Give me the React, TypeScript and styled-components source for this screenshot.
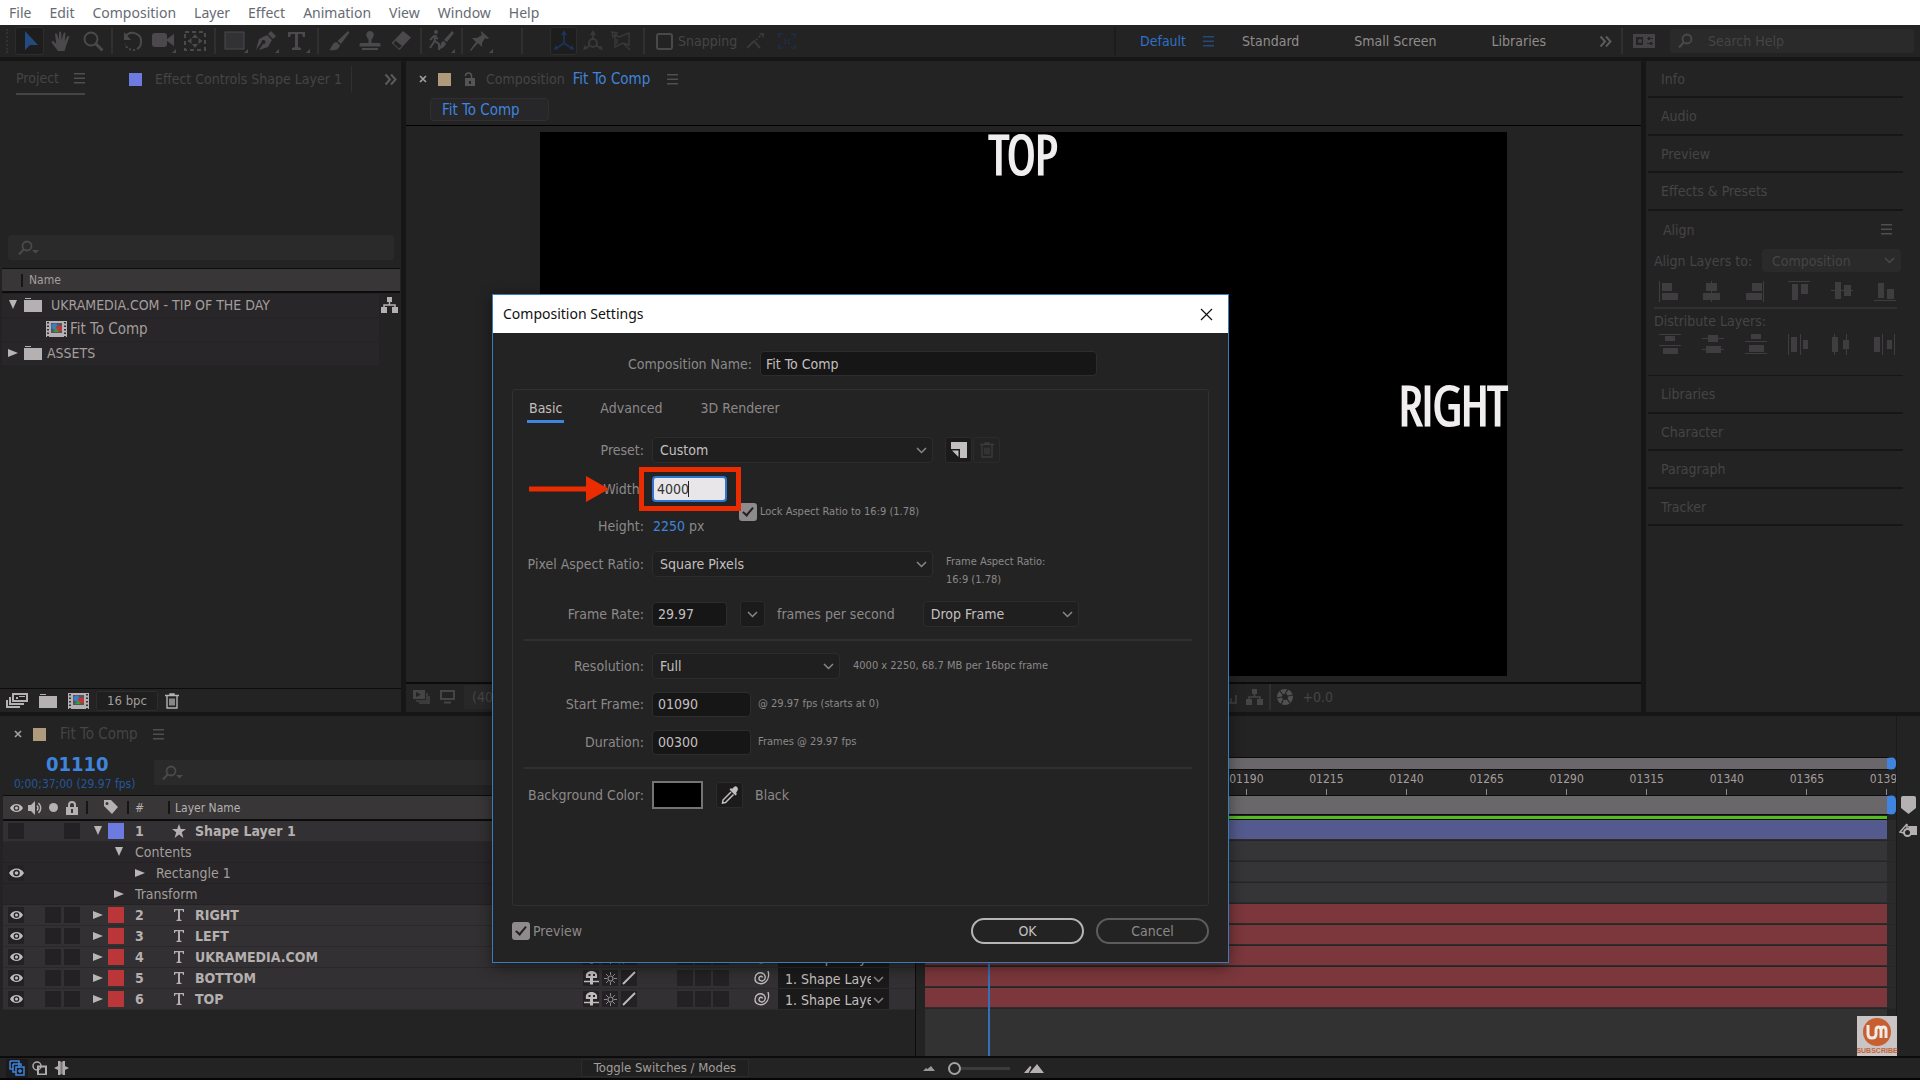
import React from "react";
import styled, { createGlobalStyle, css } from "styled-components";

const ui = `"DejaVu Sans Condensed", "Noto Sans", sans-serif`;
const system = `"Noto Sans", "Open Sans", sans-serif`;
const c = {
  panel: "#232323",
  gap: "#161616",
  line: "#0c0c0c",
  field: "#2a2a2a",
  dim: "#464446",
  dimIcon: "#4b494c",
  text: "#a39e9d",
  bright: "#c3bfbf",
  label: "#8c8889",
  blue: "#2f70c8",
  blueBright: "#3f84de",
  row: "#323032",
  subRow: "#282628",
  head: "#383637",
  tan: "#b09a7c",
  violet: "#6d7ae0",
  red: "#ba3638",
};

const Global = createGlobalStyle`
  *, *::before, *::after { box-sizing: border-box; }
  html, body { margin: 0; background: ${c.panel}; }
  body { font: 14px/20px ${ui}; color: ${c.text}; }
  button, input, select { font: inherit; color: inherit; margin: 0; padding: 0; border: 0; background: none; }
  svg { display: block; flex: none; }
`;

/* ---------- page frame ---------- */
const Page = styled.div`
  height: 100vh;
  min-height: 900px;
  display: flex;
  flex-direction: column;
  background: ${c.gap};
  overflow: hidden;
  position: relative;
`;
const MenuBar = styled.nav`
  flex: none;
  height: 25px;
  display: flex;
  align-items: center;
  gap: 18px;
  padding: 0 9px;
  background: #fff;
  font: 14px/20px ${system};
`;
const MenuLink = styled.a`
  color: #666b73;
  text-decoration: none;
`;
const Toolbar = styled.div`
  flex: none;
  height: 32px;
  display: flex;
  align-items: center;
  background: ${c.panel};
  margin-bottom: 4px;
  padding-right: 6px;
`;
const Tool = styled.button<{ $on?: boolean; $w?: number; $faint?: boolean }>`
  width: ${(p) => p.$w ?? 31}px;
  height: 28px;
  display: flex;
  align-items: center;
  justify-content: center;
  color: ${(p) => (p.$faint ? "#3a383a" : c.dimIcon)};
  border-radius: 3px;
  ${(p) => p.$on && css`background: #1d1d1e; border: 1px solid #2d2d2e; color: ${p.$faint ? "#1b3458" : "#234b80"};`}
`;
const ToolSep = styled.span<{ $m?: number }>`
  width: 2px;
  height: 26px;
  margin: 0 ${(p) => p.$m ?? 4}px;
  background: #303030;
`;
const Grip = styled.span`
  width: 4px;
  height: 24px;
  margin: 0 5px 0 6px;
  border-left: 2px dotted #323232;
`;
const Spacer = styled.span`
  flex: 1;
`;
const SnapLabel = styled.label`
  display: flex;
  align-items: center;
  gap: 5px;
  margin-left: 3px;
  color: ${c.dim};
`;
const SnapBox = styled.input`
  appearance: none;
  width: 17px;
  height: 17px;
  border: 2px solid #4a484a;
  border-radius: 3px;
`;
const Workspaces = styled.div`
  display: flex;
  align-items: center;
  padding-left: 24px;
  border-left: 2px solid #1c1c1c;
  height: 28px;
`;
const Workspace = styled.button<{ $on?: boolean; $end: number }>`
  color: ${(p) => (p.$on ? c.blue : "#918c8c")};
  margin-right: ${(p) => p.$end}px;
`;
const HelpSearch = styled.label`
  width: 244px;
  height: 24px;
  display: flex;
  align-items: center;
  gap: 8px;
  padding-left: 8px;
  margin-left: 14px;
  border-radius: 3px;
  background: ${c.field};
  color: ${c.dimIcon};
`;
const PlainInput = styled.input`
  flex: 1;
  min-width: 0;
  outline: 0;
  &::placeholder { color: ${c.dim}; opacity: 1; }
`;

/* ---------- panels ---------- */
const Upper = styled.div`
  flex: 1;
  min-height: 0;
  display: flex;
  gap: 5px;
  margin-bottom: 4px;
`;
const Panel = styled.section<{ $w?: number }>`
  ${(p) => (p.$w ? `flex: 0 0 ${p.$w}px;` : "flex: 1; min-width: 0;")}
  display: flex;
  flex-direction: column;
  background: ${c.panel};
`;
const TabRow = styled.div`
  flex: none;
  height: 36px;
  display: flex;
  align-items: center;
  color: ${c.dim};
`;
const ActiveTab = styled.div`
  display: flex;
  align-items: center;
  gap: 15px;
  height: 32px;
  margin: 0 44px 0 16px;
  border-bottom: 2px solid #464446;
`;
const Swatch = styled.span<{ $c: string; $s?: number }>`
  flex: none;
  width: ${(p) => p.$s ?? 13}px;
  height: ${(p) => p.$s ?? 13}px;
  background: ${(p) => p.$c};
`;
const TabText = styled.span<{ $on?: boolean; $name?: boolean }>`
  color: ${(p) => (p.$on ? c.blueBright : c.dim)};
  font-size: ${(p) => (p.$name ? 15 : 14)}px;
`;
const TabEdge = styled.span`
  width: 1px;
  height: 26px;
  margin: 0 32px 0 9px;
  background: #303030;
`;
const ProjectSearch = styled.label`
  display: flex;
  align-items: center;
  height: 25px;
  margin: 138px 7px 8px 8px;
  padding-left: 10px;
  border-radius: 3px;
  background: ${c.field};
  color: ${c.dimIcon};
`;
const ListHead = styled.div`
  height: 25px;
  margin: 0 1px 0 2px;
  display: flex;
  align-items: center;
  background: ${c.head};
  border-top: 1px solid ${c.line};
  border-bottom: 2px solid ${c.line};
  font-size: 12px;
`;
const HeadSep = styled.span<{ $l: number; $r: number }>`
  width: 2px;
  height: 13px;
  margin: 0 ${(p) => p.$r}px 0 ${(p) => p.$l}px;
  background: #161616;
`;
const FileRow = styled.div`
  display: flex;
  align-items: center;
  margin-left: 2px;
  height: 24px;
`;
const FileCell = styled.div<{ $pad: number; $gap: number; $name?: boolean }>`
  flex: 1;
  height: 23px;
  display: flex;
  align-items: center;
  gap: 6px;
  padding-left: ${(p) => p.$pad}px;
  background: ${c.subRow};
  color: ${c.text};
  font-size: ${(p) => (p.$name ? 15 : 14)}px;
  span { margin-left: ${(p) => p.$gap}px; }
`;
const FileSide = styled.div`
  width: 22px;
  padding-left: 2px;
`;
const ProjectFoot = styled.div`
  flex: none;
  margin-top: auto;
  height: 24px;
  display: flex;
  align-items: center;
  gap: 11px;
  padding-left: 6px;
  border-top: 1px solid ${c.line};
  color: #b6b2b2;
`;
const IconButton = styled.button`
  display: flex;
  color: inherit;
`;
const DepthButton = styled.button`
  width: 62px;
  height: 20px;
  border: 1px solid #2d2d2d;
  border-radius: 3px;
  background: #1f1f1f;
  color: ${c.text};
  font-size: 13px;
  line-height: 18px;
  margin: 0 -4px;
`;

/* ---------- viewer ---------- */
const CrumbRow = styled.div`
  flex: none;
  height: 29px;
  padding: 1px 0 0 24px;
  border-bottom: 1px solid #000;
`;
const Crumb = styled.button`
  width: 119px;
  height: 23px;
  padding-left: 11px;
  text-align: left;
  font-size: 15px;
  color: ${c.blueBright};
  background: #272729;
  border: 1px solid #2f2f31;
  border-radius: 4px;
`;
const Viewer = styled.div`
  flex: 1;
  min-height: 0;
  display: flex;
  justify-content: center;
  padding: 6px 0;
`;
const Canvas = styled.div`
  height: 100%;
  aspect-ratio: 16 / 9;
  background: #000;
  position: relative;
`;
const Title = styled.span<{ $at: "top" | "right" }>`
  position: absolute;
  font: 300 54px/42px "Open Sans Condensed Light", "Open Sans Condensed", "Liberation Sans Narrow", sans-serif;
  color: #f0eeee;
  -webkit-text-stroke: 3px #f0eeee;
  ${(p) =>
    p.$at === "top"
      ? css`top: 0; left: 0; right: 0; text-align: center;`
      : css`top: 0; bottom: 0; right: 0; height: 42px; margin: auto 0;`}
`;
const ViewerFoot = styled.div`
  flex: none;
  height: 30px;
  display: flex;
  align-items: center;
  padding: 0 308px 2px 7px;
  gap: 9px;
  border-top: 2px solid ${c.line};
  color: ${c.dim};
`;

/* ---------- side stack ---------- */
const SideHead = styled.button<{ $line?: boolean }>`
  display: flex;
  justify-content: space-between;
  align-items: center;
  width: 255px;
  height: 37px;
  margin-left: 2px;
  padding: 0 13px;
  color: ${c.dim};
  text-align: left;
  ${(p) => p.$line && `border-bottom: 2px solid ${c.gap};`}
  &:nth-child(even) { height: 38px; }
`;
const AlignBox = styled.div`
  width: 255px;
  height: 165px;
  margin-left: 2px;
  border-bottom: 1px solid ${c.gap};
  color: ${c.dim};
`;
const AlignRow = styled.div`
  display: flex;
  align-items: center;
  justify-content: space-between;
  margin: 1px 2px 9px 6px;
`;
const IconGrid = styled.div`
  display: grid;
  grid-template-columns: repeat(6, 43px);
  justify-items: center;
`;
const AlignTitle = styled.div`
  margin: 5px 6px 3px;
  padding-top: 2px;
  border-top: 2px solid #303030;
`;

/* ---------- select ---------- */
const SelectWrap = styled.span<{ $w: number; $h?: number; $kind?: "flat" | "parent" }>`
  display: inline-grid;
  align-items: center;
  width: ${(p) => p.$w}px;
  height: ${(p) => p.$h ?? 26}px;
  background: ${(p) => (p.$kind === "flat" ? c.field : p.$kind === "parent" ? "#1b1a1b" : "#1f1f1f")};
  border: 1px solid ${(p) => (p.$kind ? "transparent" : "#2c2c2c")};
  border-radius: ${(p) => (p.$kind === "parent" ? 0 : 4)}px;
  svg { grid-area: 1 / 1; justify-self: end; margin-right: ${(p) => (p.$kind === "parent" ? 4 : 5)}px; pointer-events: none; }
`;
const SelectBox = styled.select<{ $c: string; $pad?: number; $end?: number }>`
  grid-area: 1 / 1;
  appearance: none;
  width: 100%;
  height: 100%;
  padding: 0 ${(p) => p.$end ?? 22}px 0 ${(p) => p.$pad ?? 7}px;
  color: ${(p) => p.$c};
  outline: 0;
`;

function Chevron({ color = "#8a8687" }: { color?: string }) {
  return (
    <svg width="11" height="7" viewBox="0 0 11 7" fill="none" stroke={color} strokeWidth="1.5">
      <path d="M1 1l4.500 4.500L10 1" />
    </svg>
  );
}
function Select(p: { id?: string; label?: string; w: number; h?: number; kind?: "flat" | "parent"; color?: string; value: string; pad?: number; end?: number }) {
  return (
    <SelectWrap $w={p.w} $h={p.h} $kind={p.kind}>
      <SelectBox id={p.id} aria-label={p.label} $c={p.color ?? c.bright} $pad={p.pad} $end={p.end} defaultValue={p.value}>
        <option>{p.value}</option>
      </SelectBox>
      <Chevron color={p.kind === "flat" ? "#4a484a" : undefined} />
    </SelectWrap>
  );
}

/* ---------- icons ---------- */
type IcoProps = { w?: number; h?: number; children: React.ReactNode; color?: string; box?: string };
const Ico = ({ w = 22, h = 22, color = "inherit", box, children }: IcoProps) => (
  <svg width={w} height={h} viewBox={box ?? `0 0 ${w} ${h}`} fill="currentColor" color={color} aria-hidden="true">
    {children}
  </svg>
);
const stroke = { fill: "none", stroke: "currentColor", strokeWidth: 2 } as const;
const Corner = () => <path d="M26 25v-4l-4 4z" />;

const Arrow = () => <Ico><path d="M6 1v19l5-5h8z" /></Ico>;
const Hand = () => (
  <Ico>
    <path d="M8 21c-2-3-5-6-6.500-9 .5-1.500 2-1.200 3 .2l1.800 1.800L5 4.500C5 3 6.800 2.800 7.200 4.200L8.800 10 9 2.500C9.200 1 11 1 11.200 2.500l.4 7.500L13.500 3.200c.4-1.300 2.100-1 2 .5L14.700 11l2.600-4.500c.8-1 2.200-.3 1.800 1L16 16c-.5 2-1 3.500-1.500 5z" />
  </Ico>
);
const Zoom = ({ s = 22 }: { s?: number }) => (
  <Ico w={s} h={s} box="0 0 22 22"><circle cx="9" cy="9" r="6.500" {...stroke} /><path d="M13.500 13.500l7 7" {...stroke} strokeWidth={3} /></Ico>
);
const SearchFlip = ({ menu }: { menu?: boolean }) => (
  <Ico w={22} h={16}>
    <circle cx="9" cy="6" r="4.500" {...stroke} strokeWidth={1.8} />
    <path d="M6 9l-5 5.500" {...stroke} />
    {menu && <path d="M14 10h7l-3.500 3.500z" />}
  </Ico>
);
const Rotate = () => <Ico><path d="M4 6C8 0 20 3 19 12c0 4-2 6-4 7" {...stroke} /><path d="M2 2v8h7z" /><path d="M13 20a9 9 0 0 1-10-6" {...stroke} strokeDasharray="2 2" /></Ico>;
const Camera = () => <Ico w={28} h={26}><rect x="2" y="5" width="15" height="14" rx="3" /><path d="M17 11l7-5v12l-7-5z" /><Corner /></Ico>;
const PanBehind = () => (
  <Ico>
    <rect x="1" y="2" width="20" height="18" {...stroke} strokeDasharray="4 3" />
    <path d="M11 4l3 4H8zM11 18l3-4H8zM3.500 11l4-3v6zM18.500 11l-4-3v6z" />
  </Ico>
);
const RectTool = () => <Ico w={28} h={26}><rect x="3" y="4" width="19" height="17" fill="#323134" stroke="currentColor" /><Corner /></Ico>;
const Pen = () => <Ico w={28} h={26}><path d="M3 22l3-11 8-4 5 5-4 7-9 3 4-6a2 2 0 1 0-1.500-1.500zM15 6l3-3 5 5-3 3z" /><Corner /></Ico>;
const TypeTool = () => <Ico w={28} h={26}><path d="M4 4h17v5h-2l-1-3h-4v13l3 1v2H8v-2l3-1V6H7L6 9H4z" /><Corner /></Ico>;
const Brush = () => <Ico><path d="M20 1l1.500 1.500L13 14l-3.500-3zM8.500 12l3.500 3c-1 5-6 6-11 5 3-1 2-7 7.500-8z" /></Ico>;
const Stamp = () => <Ico><path d="M11 1a4 4 0 0 1 3 6.500l-1.500 2V13H20c1 0 1.500 1 1.500 2v1.500h-21V15c0-1 .5-2 1.500-2h7.500V9.500L8 7.500A4 4 0 0 1 11 1zM3 18h16v2H3z" /></Ico>;
const Eraser = () => <Ico><path d="M13 1l8 6.500L9.500 20 1.500 13z" /><path d="M5.500 10.500l6.500 5.500-3 2.500-5.500-5z" fill={c.panel} /></Ico>;
const Roto = () => <Ico w={30} h={26}><circle cx="9" cy="4" r="2" /><path d="M9 7l-2 7-4 6M8 13l4 3v6M3 12l4-4 4 3" {...stroke} /><path d="M25 3l2 2-7 9-3-2zM16 13l3 2c-1 4-4 6-8 6 3-2 2-6 5-8z" /><path d="M28 25v-4l-4 4z" /></Ico>;
const Pin = () => <Ico w={28} h={26}><path d="M14 3l8 7-2 1-2-1-3 5v4l-4-4-7 8-1-1 6-8-4-4h5l5-3-1-2z" /><Corner /></Ico>;
const Axis = ({ sphere }: { sphere?: boolean }) => (
  <Ico><path d="M11 13V4M11 13l-7 5M11 13l7 5" {...stroke} strokeWidth={1.800} /><path d="M11 0l3 5H8zM1 20l1.500-5 3 4zM21 20l-1.500-5-3 4z" />{sphere && <circle cx="11" cy="13" r="4" fill={c.panel} stroke="currentColor" strokeWidth="2" />}</Ico>
);
const AxisView = () => <Ico><path d="M4 5l4 2 10-4v12l-6-2-8 4z" {...stroke} strokeWidth={1.500} /><path d="M1 2l5 1-4 4zM13 14l6 6M6 9v5" {...stroke} strokeWidth={1.500} /></Ico>;
const SnapLine = () => <Ico w={20} h={18}><path d="M1 16l7-7 6 7" {...stroke} /><path d="M10 8l5-5" {...stroke} strokeDasharray="2 2" /><path d="M13 1h5v5z" /></Ico>;
const SnapGrid = () => <Ico w={18} h={16} color="#1d2f4a"><path d="M1 5V1h4M13 1h4v4M17 11v4h-4M5 15H1v-4M6 6l2 2M12 6l-2 2M6 11l2-2M12 11l-2-2" {...stroke} strokeWidth={1.500} /></Ico>;
const Burger = ({ color = "#504e50" }: { color?: string }) => <Ico w={11} h={11} color={color}><path d="M0 0h11v1.500H0zM0 4.500h11V6H0zM0 9h11v1.500H0z" /></Ico>;
const More = ({ color = "#5c5a5c" }: { color?: string }) => <Ico w={13} h={13} color={color}><path d="M1.500 1.500l4.500 5-4.500 5M7 1.500l4.500 5-4.500 5" {...stroke} /></Ico>;
const Monitor2 = () => <Ico w={24} h={14} color="#444244"><path fillRule="evenodd" d="M1 0h22v14H1zM4 3v8h7V3zM15 5h6V4h-6zM15 10h6V9h-6z" /><circle cx="8" cy="7" r="2" /><path d="M17 3v3M19 8v3" {...stroke} stroke={c.panel} /></Ico>;
const CloseX = () => <Ico w={8} h={8} color="#a5a1a1"><path d="M1 1l6 6M7 1L1 7" {...stroke} strokeWidth={1.600} /></Ico>;
const OpenLock = () => <Ico w={11} h={14} color="#565456"><path fillRule="evenodd" d="M1 6h10v8H1zM5 9v3h2V9z" /><path d="M1.500 4c0-4 6-4 6 0v3" {...stroke} strokeWidth={1.600} /></Ico>;
const Folder = () => <Ico w={18} h={14} color="#b5b1b2"><path d="M1 0h6v1H1zM0 2h18v12H0z" /></Ico>;
const CompIcon = () => (
  <Ico w={21} h={16}>
    <path d="M0 0h21v16H0z" fill="#b5b1b2" />
    <path d="M2 1v15M19 1v15" stroke="#333" strokeWidth="2" strokeDasharray="1.500 2" />
    <path d="M5 2h11v10H5z" fill="#55555a" />
    <circle cx="8.500" cy="5.500" r="3" fill="#3a7ec8" /><path d="M10 5h6v5h-6z" fill="#c23636" /><path d="M7 11l3-4 3 4z" fill="#39993c" />
  </Ico>
);
const Flow = ({ color = "#b5b1b2" }: { color?: string }) => <Ico w={17} h={16} color={color}><path d="M6 0h5v5H6zM0 10h6v6H0zM11 10h6v6h-6z" /><path d="M8.500 5v3M3 11V8h11v3" {...stroke} strokeWidth={1.500} /></Ico>;
const Interpret = () => <Ico w={22} h={15}><path fillRule="evenodd" d="M6 0h16v9H6zM8 2v5h12V2zM10 4h2v2h-2zM13 3h6v1h-6z" /><path d="M4 4v7h14M1 7v7h13" {...stroke} strokeWidth={2} /></Ico>;
const Trash = ({ color }: { color?: string }) => <Ico w={14} h={16} color={color}><path d="M0 2.500h14M5 2V1h4v1M2 3v12h10V3M5 5.500v7M7 5.500v7M9 5.500v7" {...stroke} strokeWidth={1.400} /></Ico>;
const Eye = ({ w = 15 }: { w?: number }) => <Ico w={w} h={10} box="0 0 15 10" color="#c0bcbc"><path fillRule="evenodd" d="M0 5C3-1 12-1 15 5c-3 6-12 6-15 0zm7.500-3.300a3.300 3.300 0 1 0 0 6.600 3.300 3.300 0 0 0 0-6.600z" /><circle cx="7.500" cy="5" r="1.800" /></Ico>;
const Tri = ({ down }: { down?: boolean }) => <Ico w={10} h={10} color="#b9b5b5"><path d={down ? "M1 0h8L5 9z" : "M0 1l10 4-10 4z"} /></Ico>;
const Speaker = () => <Ico w={16} h={14}><path d="M0 4h3l4-4v14L3 10H0z" /><path d="M9 4.500q2 2.500 0 5M10.500 2q4.500 5 0 10" {...stroke} strokeWidth={1.500} /></Ico>;
const Lock = () => <Ico w={12} h={14}><path fillRule="evenodd" d="M0 6h12v8H0zM5 8v4h2V8z" /><path d="M3 6V4a3 3 0 0 1 6 0v2" {...stroke} /></Ico>;
const Tag = () => <Ico w={16} h={15}><path fillRule="evenodd" d="M1 0h7l7 7-6 7-8-8zM4 2a1.500 1.500 0 1 0 0 3 1.500 1.500 0 0 0 0-3z" /></Ico>;
const Star = () => <Ico w={14} h={14}><path d="M7 0l1.800 5H14l-4.200 3.200L11.400 14 7 10.500 2.600 14l1.600-5.800L0 5h5.200z" /></Ico>;
const LayerT = () => <Ico w={10} h={12}><path d="M0 0h10v3H9L8.500 1.200H6V10.500l1.500.5v1h-5v-1L4 10.500V1.200H1.500L1 3H0z" /></Ico>;
const Shy = () => <Ico w={15} h={14}><path fillRule="evenodd" d="M2 7C1 2 4 0 7.500 0S14 2 13 7zM4.500 3v2h2V3zM9 3v2h2V3z" /><path d="M0 10.500h15" {...stroke} strokeWidth={1.500} /><path d="M7.500 6v7.500" {...stroke} strokeWidth={3} /></Ico>;
const Sun = () => <Ico w={13} h={13} color="#8d8989"><circle cx="6.500" cy="6.500" r="2.500" {...stroke} strokeWidth={1.200} /><path d="M6.500 0v3M6.500 10v3M0 6.500h3M10 6.500h3M2 2l2 2M9 9l2 2M11 2L9 4M4 9l-2 2" {...stroke} strokeWidth={1} /></Ico>;
const Slash = () => <Ico w={14} h={14}><path d="M1 13L13 1" {...stroke} /></Ico>;
const Spiral = () => <Ico w={16} h={14}><path d="M14 0c1 3 1 8-2.500 11C8 14 1 13 1 7.500 1 3 5 1 8 2s4 4 2.500 6.500C9 11 4.500 10 5 7c.5-2 3-2.500 3.500-.5" {...stroke} strokeWidth={1.400} /></Ico>;
const Aperture = () => <Ico w={16} h={16} color="#525052"><path fillRule="evenodd" d="M8 0a8 8 0 1 0 0 16A8 8 0 0 0 8 0zm0 5a3 3 0 1 1 0 6 3 3 0 0 1 0-6z" /><path d="M8 5L11 0M11 7l5-1M10 10l3 4M6 11l-2 5M5 8l-5 1M6 6L3 2" stroke={c.panel} strokeWidth="1.200" /></Ico>;
const Mountains = ({ big }: { big?: boolean }) => big
  ? <Ico w={20} h={9} color="#b5b1b2"><path d="M0 9l6-7 1.500 1L4.500 9zM5.500 9L13 0l7 9z" /></Ico>
  : <Ico w={12} h={5} color="#9a9697"><path d="M0 5l3-3 1.500 1L8 0l4 5z" /></Ico>;

type Bar = [number, number, number, number];
const alignIcons: Bar[][] = [
  [[0, 0, 1, 21], [3, 2, 10, 8], [3, 12, 16, 7]],
  [[9, 0, 1, 21], [4, 2, 11, 8], [1, 12, 17, 7]],
  [[18, 0, 1, 21], [7, 2, 10, 8], [1, 12, 16, 7]],
  [[0, 0, 22, 1], [4, 3, 6, 16], [13, 3, 7, 10]],
  [[0, 9, 22, 1], [4, 1, 6, 17], [13, 4, 7, 11]],
  [[0, 19, 22, 1], [4, 2, 6, 15], [13, 8, 7, 10]],
];
const distributeIcons: Bar[][] = [
  [[0, 0, 22, 1], [6, 2, 10, 5], [0, 11, 22, 1], [4, 14, 15, 6]],
  [[0, 4, 22, 1], [6, 1, 10, 7], [0, 15, 22, 1], [4, 12, 15, 7]],
  [[6, 0, 10, 5], [0, 7, 22, 1], [4, 11, 15, 7], [0, 19, 22, 1]],
  [[0, 0, 1, 21], [3, 3, 6, 15], [12, 0, 1, 21], [15, 6, 5, 9]],
  [[3, 0, 1, 21], [1, 3, 6, 15], [15, 0, 1, 21], [12, 6, 6, 9]],
  [[0, 3, 6, 15], [8, 0, 1, 21], [13, 6, 5, 9], [20, 0, 1, 21]],
];
const Bars = ({ bars }: { bars: Bar[] }) => (
  <Ico w={22} h={21} color="#3f3d3f">{bars.map(([x, y, w, h], i) => <rect key={i} x={x} y={y} width={w} height={h} />)}</Ico>
);

/* ---------- timeline ---------- */
const Timeline = styled.section`
  flex: none;
  display: flex;
  flex-direction: column;
  height: 364px;
  background: ${c.panel};
  border-bottom: 2px solid #060606;
`;
const TimelineBody = styled.div`
  flex: 1;
  min-height: 0;
  display: flex;
  border-bottom: 2px solid ${c.line};
`;
const Layers = styled.div`
  flex: 0 0 916px;
  border-right: 1px solid ${c.line};
`;
const TimeTabs = styled.div`
  height: 36px;
  display: flex;
  align-items: center;
  padding-left: 14px;
`;
const TimeRow = styled.div`
  display: flex;
  height: 43px;
`;
const Timecode = styled.div`
  width: 154px;
  padding-left: 14px;
`;
const Frame = styled.div`
  margin-left: 32px;
  font-size: 20px;
  line-height: 25px;
  font-weight: bold;
  color: ${c.blueBright};
`;
const Clock = styled.div`
  font-size: 12px;
  line-height: 14px;
  color: #23569c;
`;
const LayerSearch = styled.label`
  flex: 0 0 400px;
  display: flex;
  align-items: center;
  height: 25px;
  margin-top: 8px;
  padding-left: 8px;
  background: ${c.field};
  color: ${c.dimIcon};
`;
const LayerHead = styled.div`
  height: 26px;
  margin-left: 3px;
  display: flex;
  align-items: center;
  background: ${c.head};
  border-top: 1px solid ${c.line};
  border-bottom: 2px solid ${c.line};
  color: #b5b1b2;
  font-size: 12px;
`;
const HeadIcon = styled.span<{ $w: number }>`
  width: ${(p) => p.$w}px;
  display: flex;
  justify-content: center;
`;
const LayerRow = styled.div<{ $sub?: boolean }>`
  height: 21px;
  margin-left: 3px;
  padding-left: 5px;
  display: flex;
  align-items: center;
  background: ${(p) => (p.$sub ? c.subRow : c.row)};
  border-bottom: 1px solid ${(p) => (p.$sub ? "#232123" : "#2a282a")};
  color: ${(p) => (p.$sub ? c.text : "#b5b0af")};
  font-weight: ${(p) => (p.$sub ? "normal" : "bold")};
`;
const Cell = styled.span<{ $fill?: boolean; $r?: number }>`
  flex: none;
  width: 16px;
  height: 16px;
  margin-right: ${(p) => p.$r ?? 2}px;
  display: flex;
  align-items: center;
  justify-content: center;
  background: ${(p) => (p.$fill ? "#232123" : "transparent")};
`;
const LayerNo = styled.span`
  width: 48px;
  padding-left: 11px;
`;
const LayerKind = styled.span`
  width: 14px;
  margin-right: 9px;
  display: flex;
  justify-content: center;
`;
const Switches = styled.span`
  margin-left: auto;
  display: flex;
  align-items: center;
  padding-right: 26px;
  font-weight: normal;
  color: #c0bcbc;
`;
const Twirl = styled.span<{ $l: number; $r: number }>`
  display: flex;
  margin: 0 ${(p) => p.$r}px 0 ${(p) => p.$l}px;
`;
const Tracks = styled.div`
  flex: 1;
  min-width: 0;
  display: flex;
  flex-direction: column;
  padding: 41px 0 0 9px;
  overflow: hidden;
  position: relative;
`;
const NavBar = styled.div<{ $h: number }>`
  flex: none;
  height: ${(p) => p.$h}px;
  background: #69676a;
  border-top: 1px solid ${c.line};
  border-bottom: 1px solid ${c.line};
  border-right: 9px solid ${c.blueBright};
  border-radius: 0 5px 5px 0;
`;
const Ruler = styled.div`
  flex: none;
  display: flex;
  height: 25px;
  margin: 0 -31px 0 -39px;
`;
const Tick = styled.span`
  flex: 1;
  display: flex;
  flex-direction: column;
  align-items: center;
  justify-content: flex-end;
  font-size: 12px;
  line-height: 19px;
  &::after { content: ""; width: 1px; height: 6px; background: #8e8a8b; }
`;
const CacheBar = styled.div`
  flex: none;
  height: 5px;
  margin-right: 9px;
  border-top: 1px solid ${c.panel};
  border-bottom: 1px solid ${c.line};
  background: #55bd20;
`;
const Track = styled.div`
  flex: none;
  height: 21px;
  padding-right: 9px;
  background: #2b2a2b;
  border-bottom: 1px solid #272627;
`;
const Clip = styled.div<{ $c: string }>`
  height: 20px;
  background: ${(p) => p.$c};
  border-bottom: 1px solid #2e2c2d;
`;
const TrackRest = styled.div`
  flex: 1;
  margin-right: 9px;
  background: #323232;
`;
const Playhead = styled.span`
  position: absolute;
  top: 60px;
  bottom: 0;
  left: 72px;
  width: 2px;
  background: #3470b8;
`;
const Gutter = styled.div`
  flex: 0 0 24px;
  display: flex;
  flex-direction: column;
  align-items: center;
  gap: 9px;
  padding-top: 80px;
  border-left: 1px solid #191919;
  color: #b5b1b2;
`;
const TimeFoot = styled.div`
  height: 20px;
  display: flex;
  align-items: center;
  padding-left: 6px;
  color: #a5a1a1;
`;
const FootIcon = styled.button<{ $on?: boolean }>`
  width: 22px;
  height: 19px;
  display: flex;
  align-items: center;
  justify-content: center;
  color: ${(p) => (p.$on ? c.blueBright : "#b0acac")};
  background: ${(p) => (p.$on ? "#1b1b1c" : "transparent")};
`;
const ToggleButton = styled.button`
  width: 168px;
  height: 18px;
  margin: 0 174px 0 509px;
  border: 1px solid #2c2a2c;
  background: #202020;
  color: ${c.text};
  font-size: 13px;
  line-height: 16px;
`;
const ZoomSlider = styled.input`
  appearance: none;
  width: 62px;
  height: 14px;
  margin: 0 14px 0 13px;
  background: linear-gradient(#3c3a3c, #3c3a3c) center / 100% 3px no-repeat;
  &::-webkit-slider-thumb {
    appearance: none;
    width: 13px;
    height: 13px;
    border: 2px solid #a5a1a1;
    border-radius: 50%;
    background: ${c.panel};
  }
`;
const Badge = styled.a`
  position: absolute;
  right: 23px;
  bottom: 24px;
  width: 40px;
  height: 40px;
  display: flex;
  flex-direction: column;
  align-items: center;
  padding-top: 2px;
  background: #c9c5c4;
  color: #c4623a;
  font: bold 7px/9px "Liberation Sans Narrow", "Liberation Sans", sans-serif;
  text-decoration: none;
`;
const BadgeMark = styled.span`
  width: 28px;
  height: 28px;
  border-radius: 50%;
  background: #c85f30;
  display: flex;
  align-items: center;
  justify-content: center;
`;

/* ---------- dialog ---------- */
const Dialog = styled.div`
  position: absolute;
  left: 492px;
  top: 294px;
  width: 737px;
  background: ${c.panel};
  border: 1px solid #3a7cba;
  box-shadow: 0 4px 14px rgba(0, 0, 0, 0.45);
  color: ${c.label};
`;
const DialogTitle = styled.header`
  height: 38px;
  display: flex;
  align-items: center;
  justify-content: space-between;
  padding: 0 15px 0 10px;
  background: #fff;
  color: #111;
  font: 14px/20px ${system};
`;
const NameRow = styled.div`
  display: flex;
  align-items: center;
  justify-content: flex-end;
  gap: 8px;
  padding: 18px 131px 13px 0;
`;
const Field = styled.input<{ $w: number; $hot?: boolean }>`
  width: ${(p) => p.$w}px;
  height: ${(p) => (p.$hot ? 26 : 25)}px;
  padding: 0 5px;
  border: 1px solid #2d2d2d;
  border-radius: 4px;
  background: #161616;
  color: ${c.bright};
  outline: 0;
  ${(p) => p.$hot && css`border: 2px solid #2f74d0; background: #e9e6ea; color: #333; padding: 0 3px;`}
`;
const Group = styled.div`
  margin: 0 19px;
  height: 517px;
  border: 1px solid #303030;
  border-radius: 3px;
  display: flex;
  flex-direction: column;
  gap: 12px;
`;
const Tabs = styled.div`
  display: flex;
  gap: 34px;
  padding: 6px 0 2px 14px;
`;
const Tab = styled.button<{ $on?: boolean }>`
  height: 27px;
  padding: 0 2px;
  color: ${(p) => (p.$on ? c.bright : c.label)};
  border-bottom: 3px solid ${(p) => (p.$on ? c.blueBright : "transparent")};
`;
const Row = styled.div<{ $space?: boolean }>`
  display: grid;
  grid-template-columns: 131px 1fr;
  column-gap: 8px;
  align-items: center;
  min-height: 26px;
  margin-top: ${(p) => (p.$space ? 12 : 0)}px;
`;
const RowLabel = styled.label`
  text-align: right;
  white-space: nowrap;
`;
const Line = styled.div`
  display: flex;
  align-items: center;
  position: relative;
`;
const SizeBlock = styled.div`
  display: flex;
  margin-top: 1px;
`;
const SizeRows = styled.div`
  width: 226px;
  display: grid;
  gap: 11px;
`;
const Check = styled.input`
  appearance: none;
  width: 18px;
  height: 18px;
  border-radius: 3px;
  display: grid;
  place-items: center;
  background: #8f8b8c;
  &::after {
    content: "";
    width: 6px;
    height: 11px;
    margin-top: -3px;
    border: solid #222;
    border-width: 0 2px 2px 0;
    transform: rotate(40deg);
  }
`;
const CheckLabel = styled.label<{ $small?: boolean }>`
  display: flex;
  align-items: center;
  gap: 3px;
  ${(p) => p.$small && "font-size: 11px; padding-top: 8px;"}
`;
const Note = styled.span<{ $l: number }>`
  margin-left: ${(p) => p.$l}px;
  font-size: 11px;
  line-height: 18px;
`;
const RatioNote = styled.span`
  align-self: flex-start;
  margin: 2px 0 -16px 13px;
  font-size: 11px;
  line-height: 18px;
`;
const After = styled.span<{ $l: number; $r?: number }>`
  margin: 0 ${(p) => p.$r ?? 0}px 0 ${(p) => p.$l}px;
`;
const Rule = styled.hr`
  height: 2px;
  margin: 0 16px 0 11px;
  border: 0;
  background: #303030;
`;
const SmallButton = styled.button<{ $l: number; $off?: boolean; $w?: number }>`
  width: ${(p) => p.$w ?? 27}px;
  height: 26px;
  margin-left: ${(p) => p.$l}px;
  display: flex;
  align-items: center;
  justify-content: center;
  border: 1px solid #2b2b2b;
  border-radius: 3px;
  background: ${(p) => (p.$off ? "transparent" : "#1b1b1b")};
`;
const HotText = styled.button`
  color: ${c.blueBright};
  margin-left: 1px;
`;
const ColorButton = styled.button`
  width: 51px;
  height: 28px;
  background: #000;
  border: 2px solid #767374;
`;
const DialogFoot = styled.footer`
  display: flex;
  align-items: center;
  gap: 12px;
  padding: 12px 19px 18px;
`;
const Pill = styled.button<{ $main?: boolean }>`
  width: 113px;
  height: 26px;
  border-radius: 13px;
  border: ${(p) => (p.$main ? "2px solid #b8b4b4" : "2px solid #5f5c5d")};
  color: ${(p) => (p.$main ? c.bright : c.label)};
  line-height: 20px;
`;
const HotFrame = styled.span`
  position: absolute;
  left: -13px;
  top: -9px;
  width: 102px;
  height: 44px;
  border: 5px solid #ea2c00;
  pointer-events: none;
`;
const Pointer = styled.span`
  position: absolute;
  left: -123px;
  top: 0;
`;
const Caret = styled.span`
  position: absolute;
  left: 36px;
  top: 5px;
  width: 1px;
  height: 16px;
  background: #222;
`;

const menus = ["File", "Edit", "Composition", "Layer", "Effect", "Animation", "View", "Window", "Help"];
const textLayers = ["RIGHT", "LEFT", "UKRAMEDIA.COM", "BOTTOM", "TOP"];
const ticks = Array.from({ length: 13 }, (_, i) => (i ? "0" + (1090 + i * 25) : ""));

function TopBar() {
  return (
    <Toolbar>
      <Grip />
      <Tool $on $w={29} aria-label="Selection"><Arrow /></Tool>
      <Tool $w={34} aria-label="Hand"><Hand /></Tool>
      <Tool $w={29} aria-label="Zoom"><Zoom /></Tool>
      <ToolSep />
      <Tool aria-label="Rotate"><Rotate /></Tool>
      <Tool aria-label="Camera"><Camera /></Tool>
      <Tool aria-label="Pan behind"><PanBehind /></Tool>
      <ToolSep />
      <Tool aria-label="Rectangle"><RectTool /></Tool>
      <Tool aria-label="Pen"><Pen /></Tool>
      <Tool aria-label="Type"><TypeTool /></Tool>
      <ToolSep />
      <Tool aria-label="Brush"><Brush /></Tool>
      <Tool aria-label="Clone stamp"><Stamp /></Tool>
      <Tool aria-label="Eraser"><Eraser /></Tool>
      <ToolSep />
      <Tool aria-label="Roto brush"><Roto /></Tool>
      <ToolSep />
      <Tool $w={27} aria-label="Puppet pin"><Pin /></Tool>
      <ToolSep $m={27} />
      <Tool $on $faint $w={27} aria-label="Local axis"><Axis /></Tool>
      <Tool $faint aria-label="World axis"><Axis sphere /></Tool>
      <Tool $faint $w={27} aria-label="View axis"><AxisView /></Tool>
      <ToolSep $m={8} />
      <SnapLabel><SnapBox type="checkbox" />Snapping</SnapLabel>
      <Tool $faint $w={38} aria-label="Snap edges"><SnapLine /></Tool>
      <Tool $w={24} aria-label="Snap features"><SnapGrid /></Tool>
      <Spacer />
      <Workspaces>
        <Workspace $on $end={17}>Default</Workspace>
        <Burger color="#264a78" />
        <Workspace $end={55}><After $l={28}>Standard</After></Workspace>
        <Workspace $end={55}>Small Screen</Workspace>
        <Workspace $end={53}>Libraries</Workspace>
        <More />
      </Workspaces>
      <ToolSep $m={9} />
      <Monitor2 />
      <HelpSearch>
        <SearchFlip />
        <PlainInput placeholder="Search Help" aria-label="Search Help" />
      </HelpSearch>
    </Toolbar>
  );
}

function Project() {
  return (
    <Panel $w={401}>
      <TabRow>
        <ActiveTab>Project<Burger /></ActiveTab>
        <Swatch $c={c.violet} />
        <After $l={13}>Effect Controls Shape Layer 1</After>
        <TabEdge />
        <More />
      </TabRow>
      <ProjectSearch>
        <SearchFlip menu />
        <PlainInput aria-label="Search project" />
      </ProjectSearch>
      <ListHead><HeadSep $l={19} $r={6} />Name</ListHead>
      <FileRow>
        <FileCell $pad={6} $gap={3}><Tri down /><Folder /><span>UKRAMEDIA.COM - TIP OF THE DAY</span></FileCell>
        <FileSide><Flow /></FileSide>
      </FileRow>
      <FileRow>
        <FileCell $pad={44} $gap={-3} $name><CompIcon /><span>Fit To Comp</span></FileCell>
        <FileSide />
      </FileRow>
      <FileRow>
        <FileCell $pad={6} $gap={-1}><Tri /><Folder /><span>ASSETS</span></FileCell>
        <FileSide />
      </FileRow>
      <ProjectFoot>
        <IconButton aria-label="Interpret footage"><Interpret /></IconButton>
        <IconButton aria-label="New folder"><Folder /></IconButton>
        <IconButton aria-label="New composition"><CompIcon /></IconButton>
        <DepthButton>16 bpc</DepthButton>
        <IconButton aria-label="Delete"><Trash /></IconButton>
      </ProjectFoot>
    </Panel>
  );
}

const CompTabs = styled(TabRow)`
  padding-left: 13px;
  > svg + span { margin-left: 11px; }
`;
const ZoomText = styled.span`
  padding-left: 8px;
  background: #282828;
  line-height: 24px;
`;

function CompPanel() {
  return (
    <Panel>
      <CompTabs>
        <CloseX />
        <Swatch $c={c.tan} />
        <After $l={13} $r={11}><OpenLock /></After>
        <TabText>Composition</TabText>
        <After $l={8} $r={17}><TabText $on $name>Fit To Comp</TabText></After>
        <Burger />
      </CompTabs>
      <CrumbRow><Crumb>Fit To Comp</Crumb></CrumbRow>
      <Viewer>
        <Canvas>
          <Title $at="top">TOP</Title>
          <Title $at="right">RIGHT</Title>
        </Canvas>
      </Viewer>
      <ViewerFoot>
        <Ico w={17} h={14}><path fillRule="evenodd" d="M0 0h12v9H0zM3 2v5l5-2.500z" /><path d="M14 3v8H3M16 6v7H6" {...stroke} strokeWidth={1.500} /></Ico>
        <After $l={1}><Ico w={15} h={14}><path d="M1 1h13v8H1zM4 12.500h7" {...stroke} /></Ico></After>
        <ZoomText>(40</ZoomText>
        <Spacer />
        <Ico w={14} h={14}><path d="M1 0v13h12V5M4 13V3M8 13V8" {...stroke} strokeWidth={1.500} /></Ico>
        <Flow color="#464446" />
        <ToolSep $m={-3} />
        <Aperture />
        <span>+0.0</span>
      </ViewerFoot>
    </Panel>
  );
}

function Side() {
  return (
    <Panel $w={274}>
      {["Info", "Audio", "Preview", "Effects & Presets"].map((t) => <SideHead key={t} $line>{t}</SideHead>)}
      <AlignBox>
        <SideHead as="div">Align<Burger /></SideHead>
        <AlignRow>
          <label htmlFor="align-to">Align Layers to:</label>
          <Select id="align-to" w={139} h={23} kind="flat" color={c.dim} value="Composition" pad={9} />
        </AlignRow>
        <IconGrid>{alignIcons.map((b, i) => <IconButton key={i} aria-label={`Align ${i + 1}`}><Bars bars={b} /></IconButton>)}</IconGrid>
        <AlignTitle>Distribute Layers:</AlignTitle>
        <IconGrid>{distributeIcons.map((b, i) => <IconButton key={i} aria-label={`Distribute ${i + 1}`}><Bars bars={b} /></IconButton>)}</IconGrid>
      </AlignBox>
      {["Libraries", "Character", "Paragraph", "Tracker"].map((t) => <SideHead key={t} $line>{t}</SideHead>)}
    </Panel>
  );
}

function LayerSwitches() {
  return (
    <Switches>
      <Cell $fill $r={3}><Shy /></Cell>
      <Cell $fill $r={3}><Sun /></Cell>
      <Cell $fill $r={40}><Slash /></Cell>
      <Cell $fill /><Cell $fill /><Cell $fill $r={25} />
      <Cell $r={8}><Spiral /></Cell>
      <Select w={111} h={20} kind="parent" value="1. Shape Layer 1" label="Parent" pad={6} end={17} />
    </Switches>
  );
}

function TimelinePanel() {
  return (
    <Timeline>
      <TimelineBody>
        <Layers>
          <TimeTabs>
            <CloseX />
            <After $l={11}><Swatch as="div" $c={c.tan} /></After>
            <After $l={14} $r={15}><TabText $name>Fit To Comp</TabText></After>
            <Burger />
          </TimeTabs>
          <TimeRow>
            <Timecode>
              <Frame>01110</Frame>
              <Clock>0;00;37;00 (29.97 fps)</Clock>
            </Timecode>
            <LayerSearch><SearchFlip menu /><PlainInput aria-label="Search layers" /></LayerSearch>
          </TimeRow>
          <LayerHead>
            <HeadIcon $w={26}><Eye w={13} /></HeadIcon>
            <HeadIcon $w={14}><Speaker /></HeadIcon>
            <HeadIcon $w={20}><Ico w={9} h={9}><circle cx="4.500" cy="4.500" r="4.500" /></Ico></HeadIcon>
            <HeadIcon $w={18}><Lock /></HeadIcon>
            <HeadSep $l={5} $r={15} /><Tag />
            <HeadSep $l={8} $r={6} />#
            <HeadSep $l={24} $r={5} />Layer Name
          </LayerHead>
          <LayerRow>
            <Cell $fill $r={40} /><Cell $fill $r={13} />
            <Tri down /><After $l={5}><Swatch as="div" $c={c.violet} $s={16} /></After>
            <LayerNo>1</LayerNo><LayerKind><Star /></LayerKind>Shape Layer 1
          </LayerRow>
          <LayerRow $sub><Twirl $l={106} $r={11}><Tri down /></Twirl>Contents</LayerRow>
          <LayerRow $sub><Cell $fill $r={0}><Eye /></Cell><Twirl $l={111} $r={11}><Tri /></Twirl>Rectangle 1</LayerRow>
          <LayerRow $sub><Twirl $l={106} $r={11}><Tri /></Twirl>Transform</LayerRow>
          {textLayers.map((name, i) => (
            <LayerRow key={name}>
              <Cell $fill $r={21}><Eye w={13} /></Cell><Cell $fill $r={3} /><Cell $fill $r={13} />
              <Tri /><After $l={5}><Swatch as="div" $c={c.red} $s={16} /></After>
              <LayerNo>{i + 2}</LayerNo><LayerKind><LayerT /></LayerKind>{name}
              <LayerSwitches />
            </LayerRow>
          ))}
        </Layers>
        <Tracks>
          <NavBar $h={13} />
          <Ruler>{ticks.map((t) => <Tick key={t}>{t}</Tick>)}</Ruler>
          <NavBar $h={20} />
          <CacheBar />
          <Track><Clip $c="#545a8e" /></Track>
          {[0, 1, 2].map((i) => <Track key={i}><Clip $c="#353437" /></Track>)}
          {textLayers.map((t) => <Track key={t}><Clip $c="#7b373b" /></Track>)}
          <TrackRest />
          <Playhead />
        </Tracks>
        <Gutter>
          <Ico w={15} h={18}><path d="M0 2q0-2 2-2h11q2 0 2 2v10l-7.500 6L0 12z" /></Ico>
          <Ico w={20} h={15}><path d="M9 3h9v9h-7z" /><path d="M8 1L1 9l4 1M8 1v4" {...stroke} strokeWidth={1.500} /><circle cx="8.500" cy="9.500" r="3.500" fill={c.panel} stroke="currentColor" strokeWidth="2" /></Ico>
        </Gutter>
      </TimelineBody>
      <TimeFoot>
        <FootIcon $on aria-label="Layer switches pane">
          <Ico w={16} h={16}><path d="M1 1h9v7M1 1v8h3M4 4h8v2M4 4v8h3M7 7h8v8H7zM9 11h4M11 9v4" {...stroke} strokeWidth={1.500} /></Ico>
        </FootIcon>
        <FootIcon aria-label="Transfer controls pane">
          <Ico w={15} h={14}><circle cx="5" cy="5" r="4" {...stroke} strokeWidth={1.500} /><rect x="6" y="5.500" width="8" height="8" {...stroke} /></Ico>
        </FootIcon>
        <FootIcon aria-label="In and out pane">
          <Ico w={15} h={14}><path d="M4 0h2.500v14H4V9L0 7l4-2zM11 0H8.500v14H11V9l4-2-4-2z" /><path d="M6 1h3v12H6z" opacity="0.6" /></Ico>
        </FootIcon>
        <ToggleButton>Toggle Switches / Modes</ToggleButton>
        <Mountains />
        <ZoomSlider type="range" min={0} max={100} defaultValue={0} aria-label="Timeline zoom" />
        <Mountains big />
      </TimeFoot>
    </Timeline>
  );
}

function Settings() {
  return (
    <Dialog role="dialog" aria-label="Composition Settings">
      <DialogTitle>
        Composition Settings
        <IconButton aria-label="Close"><Ico w={13} h={13}><path d="M1 1l11 11M12 1L1 12" {...stroke} strokeWidth={1.200} /></Ico></IconButton>
      </DialogTitle>
      <NameRow>
        <label htmlFor="comp-name">Composition Name:</label>
        <Field id="comp-name" $w={337} defaultValue="Fit To Comp" />
      </NameRow>
      <Group>
        <Tabs><Tab $on>Basic</Tab><Tab>Advanced</Tab><Tab>3D Renderer</Tab></Tabs>
        <Row>
          <RowLabel htmlFor="preset">Preset:</RowLabel>
          <Line>
            <Select id="preset" w={281} value="Custom" />
            <SmallButton $l={12} aria-label="Save preset"><Ico w={16} h={16} color="#c3bfbf"><path d="M0 0h16v16H9V7H0z" /><path d="M1 8.500h6.500V15z" /></Ico></SmallButton>
            <SmallButton $l={1} $off aria-label="Delete preset"><Trash color="#3c3a3c" /></SmallButton>
          </Line>
        </Row>
        <SizeBlock>
          <SizeRows>
            <Row>
              <RowLabel htmlFor="comp-width">Width:</RowLabel>
              <Line>
                <Field id="comp-width" $w={75} $hot defaultValue="4000" />
                <Caret />
                <HotFrame />
                <Pointer>
                  <Ico w={80} h={26} color="#ea2c00"><path d="M0 10.500h57V0l23 13-23 13V15.500H0z" /></Ico>
                </Pointer>
              </Line>
            </Row>
            <Row><RowLabel as="span">Height:</RowLabel><Line><HotText>2250</HotText><After $l={4}>px</After></Line></Row>
          </SizeRows>
          <CheckLabel $small><Check type="checkbox" defaultChecked />Lock Aspect Ratio to 16:9 (1.78)</CheckLabel>
        </SizeBlock>
        <Row>
          <RowLabel htmlFor="par">Pixel Aspect Ratio:</RowLabel>
          <Line><Select id="par" w={281} value="Square Pixels" /><RatioNote>Frame Aspect Ratio:<br />16:9 (1.78)</RatioNote></Line>
        </Row>
        <Row $space>
          <RowLabel htmlFor="rate">Frame Rate:</RowLabel>
          <Line>
            <Field id="rate" $w={75} defaultValue="29.97" />
            <SmallButton $l={13} $w={25} aria-label="Frame rates"><Chevron /></SmallButton>
            <After $l={12} $r={28}>frames per second</After>
            <Select label="Drop frame" w={156} value="Drop Frame" />
          </Line>
        </Row>
        <Rule />
        <Row>
          <RowLabel htmlFor="res">Resolution:</RowLabel>
          <Line><Select id="res" w={188} value="Full" /><Note $l={13}>4000 x 2250, 68.7 MB per 16bpc frame</Note></Line>
        </Row>
        <Row>
          <RowLabel htmlFor="start">Start Frame:</RowLabel>
          <Line><Field id="start" $w={99} defaultValue="01090" /><Note $l={7}>@ 29.97 fps (starts at 0)</Note></Line>
        </Row>
        <Row>
          <RowLabel htmlFor="dur">Duration:</RowLabel>
          <Line><Field id="dur" $w={99} defaultValue="00300" /><Note $l={7}>Frames @ 29.97 fps</Note></Line>
        </Row>
        <Rule />
        <Row>
          <RowLabel as="span">Background Color:</RowLabel>
          <Line>
            <ColorButton aria-label="Background color" />
            <SmallButton $l={13} aria-label="Eyedropper">
              <Ico w={18} h={18} color="#c3bfbf"><path d="M11 3l2-2c2-2 5 1 3.500 3.500L15 7l1 1-1.500 1.500-6-6L10 2z" /><path d="M10 6l-8 8-.5 3 3-.5 8-8" {...stroke} strokeWidth={1.500} /></Ico>
            </SmallButton>
            <After $l={12}>Black</After>
          </Line>
        </Row>
      </Group>
      <DialogFoot>
        <CheckLabel><Check type="checkbox" defaultChecked />Preview</CheckLabel>
        <Spacer />
        <Pill $main>OK</Pill>
        <Pill>Cancel</Pill>
      </DialogFoot>
    </Dialog>
  );
}

export default function App() {
  return (
    <>
      <Global />
      <Page>
        <MenuBar>{menus.map((m) => <MenuLink key={m} href={`#${m.toLowerCase()}`}>{m}</MenuLink>)}</MenuBar>
        <TopBar />
        <Upper><Project /><CompPanel /><Side /></Upper>
        <TimelinePanel />
        <Badge href="#subscribe">
          <BadgeMark>
            <Ico w={22} h={16}><path d="M2 1v9q0 4 4 4t4-4V6q0-3 2.500-3T15 6v8M15 6q0-3 2.500-3T20 6v8" fill="none" stroke="#f0eae6" strokeWidth="3" /></Ico>
          </BadgeMark>
          SUBSCRIBE
        </Badge>
        <Settings />
      </Page>
    </>
  );
}
